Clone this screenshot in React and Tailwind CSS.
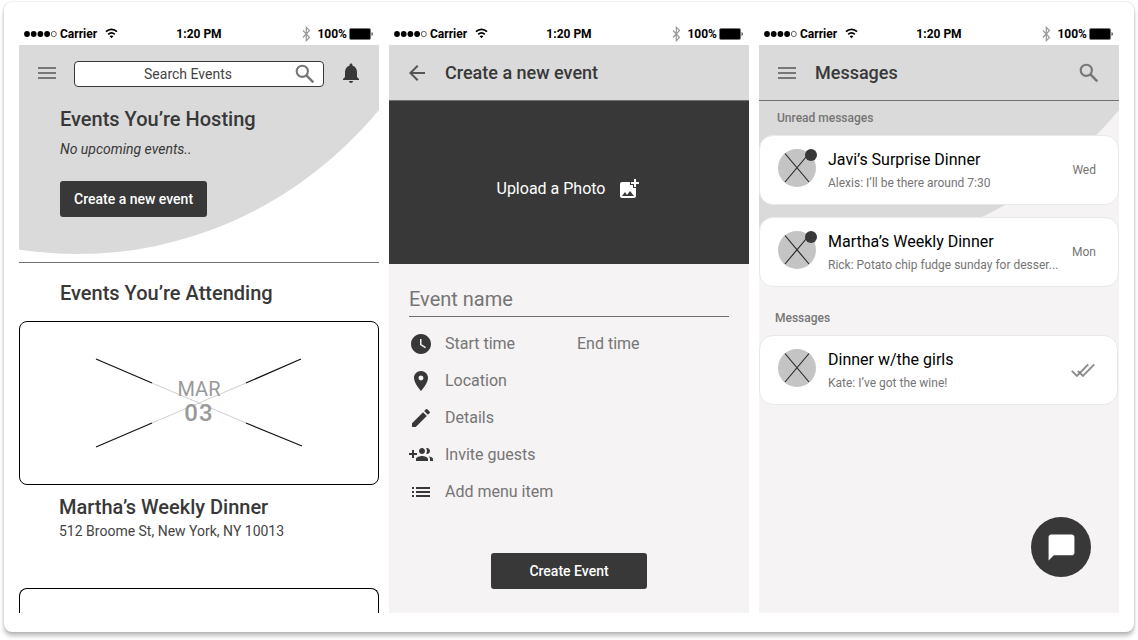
import React from "react";
import {
  MdMenu,
  MdNotifications,
  MdArrowBack,
  MdAddPhotoAlternate,
  MdWatchLater,
  MdPlace,
  MdEdit,
  MdList,
  MdChatBubble,
} from "react-icons/md";

function StatusBar() {
  return (
    <div className="grid h-6 grid-cols-3 items-center pt-px text-xs font-bold text-black">
      <div className="flex items-center pl-1">
        <svg width="34" height="8" viewBox="0 0 34 8" aria-hidden="true">
          <ellipse cx="4" cy="4" rx="2.9" ry="3" />
          <ellipse cx="10.7" cy="4" rx="2.9" ry="3" />
          <ellipse cx="17.4" cy="4" rx="2.9" ry="3" />
          <ellipse cx="24.1" cy="4" rx="2.9" ry="3" />
          <ellipse cx="30.8" cy="4" rx="2.5" ry="2.7" fill="none" stroke="#222" strokeWidth="0.7" />
        </svg>
        <span className="ml-[3px]">Carrier</span>
        <svg className="ml-2" width="13" height="11" viewBox="0 0 13 11" fill="none" stroke="#000" strokeWidth="1.7" aria-hidden="true">
          <path d="M1 3.7C4 .7 9 .7 12 3.7" />
          <path d="M3.2 6.3C5.1 4.4 7.9 4.4 9.8 6.3" />
          <path d="M4.6 8.3Q6.5 6.8 8.4 8.3L6.5 10.3Z" fill="#000" stroke="none" />
        </svg>
      </div>
      <div className="text-center">1:20 PM</div>
      <div className="flex items-center justify-end pr-1.5">
        <svg className="mr-1.5" width="9" height="16" viewBox="0 0 9 16" fill="none" stroke="#999" strokeWidth="1.2" aria-hidden="true">
          <path d="M1 4.5L7.5 11.5L4.3 14.7V1.3L7.5 4.5L1 11.5" />
        </svg>
        <span>100%</span>
        <svg className="ml-0.5" width="24" height="12" viewBox="0 0 24 12" aria-hidden="true">
          <rect x="0.5" y="0.5" width="21" height="11" rx="1.5" fill="#000" stroke="#777" />
          <path d="M22.5 4Q24 4.5 24 6T22.5 8Z" fill="#555" />
        </svg>
      </div>
    </div>
  );
}

function Swoosh() {
  return (
    <svg className="absolute top-0 left-0 h-[209px] w-full" viewBox="0 0 360 209" preserveAspectRatio="none" aria-hidden="true">
      <ellipse cx="59" cy="-213" rx="400" ry="422" fill="#dadada" />
    </svg>
  );
}

function GroupAddIcon({ size, className }) {
  return (
    <svg width={size} height={size} viewBox="0 0 24 24" fill="currentColor" className={className} aria-hidden="true">
      <path d="M8 10H5V7H3v3H0v2h3v3h2v-3h3v-2zm10 1c1.66 0 2.99-1.34 2.99-3S19.66 5 18 5c-.32 0-.63.05-.91.14.57.81.9 1.79.9 2.86s-.34 2.04-.9 2.86c.28.09.59.14.91.14zm-5 0c1.66 0 2.99-1.34 2.99-3S14.66 5 13 5c-1.66 0-3 1.34-3 3s1.34 3 3 3zm6.62 2.16c.83.73 1.38 1.66 1.38 2.84v2h3v-2c0-1.54-2.37-2.49-4.38-2.84zM13 13c-2 0-6 1-6 3v2h12v-2c0-2-4-3-6-3z" />
    </svg>
  );
}

function SearchIcon() {
  return (
    <svg width="24" height="24" viewBox="0 0 24 24" fill="none" stroke="#777" aria-hidden="true">
      <circle cx="9.3" cy="9.3" r="5.6" strokeWidth="2.1" />
      <path d="M13.2 13.2L20.3 20.3" strokeWidth="2.5" />
    </svg>
  );
}

function DoubleCheckIcon() {
  return (
    <svg width="24" height="24" viewBox="0 0 24 24" fill="none" stroke="#777" strokeWidth="1.9" aria-hidden="true">
      <path d="M.8 12.8L5.9 17.9L17.3 6.4" strokeOpacity="0.85" />
      <path d="M6.8 12.8L11.9 17.900L23.3 6.4" strokeOpacity="0.85" />
    </svg>
  );
}

function EventsScreen() {
  return (
    <section className="flex flex-col">
      <StatusBar />
      <div className="relative h-[218px] border-b border-[#707070]">
        <Swoosh />
        <div className="relative">
          <div className="flex h-14 items-center px-4">
            <button aria-label="Menu" className="text-[#777]">
              <MdMenu size={24} />
            </button>
            <label className="mt-0.5 ml-[15px] flex h-[26px] flex-1 items-center rounded border border-[#383838] bg-white pr-1.5">
              <input
                aria-label="Search events"
                placeholder="Search Events"
                className="min-w-0 flex-1 bg-transparent pl-2 text-center text-sm outline-none placeholder:text-[#444]"
              />
              <SearchIcon />
            </label>
            <button aria-label="Notifications" className="ml-[15px] text-[#383838]">
              <MdNotifications size={24} />
            </button>
          </div>
          <div className="px-[41px] pt-1">
            <h2 className="text-xl leading-7 font-medium text-[#383838]">Events You’re Hosting</h2>
            <p className="mt-1.5 text-sm leading-5 text-[#383838] italic">No upcoming events..</p>
            <button className="mt-[22px] h-9 rounded-[3px] bg-[#383838] px-3.5 text-sm font-medium text-white">
              Create a new event
            </button>
          </div>
        </div>
      </div>
      <h2 className="px-[41px] pt-4 pb-3.5 text-xl leading-7 font-medium text-[#383838]">Events You’re Attending</h2>
      <article>
        <div className="relative flex h-[164px] flex-col items-center justify-center rounded-lg border border-black pb-1">
          <svg className="absolute inset-0 m-auto" width="208" height="90" viewBox="0 0 208 90" fill="none" aria-hidden="true">
            <path d="M57 25L151 65M57 65L151 25" stroke="#cfcfcf" />
            <path d="M1 1L57 25M1 89L57 65M206 1L151 25M207 88L151 65" stroke="#111" strokeWidth="1.2" />
          </svg>
          <span className="relative text-xl leading-6 text-[#999]">MAR</span>
          <span className="relative text-2xl leading-6 font-medium tracking-wider text-[#999]">03</span>
        </div>
        <div className="px-10 pt-2">
          <h3 className="text-xl leading-7 font-medium text-[#383838]">Martha’s Weekly Dinner</h3>
          <p className="text-sm leading-5 text-[#444]">512 Broome St, New York, NY 10013</p>
        </div>
      </article>
      <div className="mt-[47px] h-[25px] rounded-t-lg border border-b-0 border-black" />
    </section>
  );
}

function FieldRow({ icon: Icon, children }) {
  return (
    <div className="flex h-[37px] items-center gap-3">
      <Icon size={24} className="shrink-0 text-[#383838]" />
      {children}
    </div>
  );
}

const field = "min-w-0 bg-transparent text-base outline-none placeholder:text-[#757575]";

function CreateScreen() {
  return (
    <section className="flex flex-col">
      <StatusBar />
      <div className="flex flex-1 flex-col bg-[#f5f3f4]">
        <header className="flex h-14 items-center gap-4 border-b border-[#707070] bg-[#dadada] px-4">
          <button aria-label="Back" className="text-[#555]">
            <MdArrowBack size={24} />
          </button>
          <h1 className="text-lg font-medium text-[#383838]">Create a new event</h1>
        </header>
        <button className="flex h-[163px] items-center justify-center gap-3 bg-[#383838] pt-3 text-base text-white">
          Upload a Photo
          <MdAddPhotoAlternate size={24} />
        </button>
        <form className="flex flex-1 flex-col px-5 pt-[17px]" onSubmit={(e) => e.preventDefault()}>
          <input
            aria-label="Event name"
            placeholder="Event name"
            className="mb-2 h-9 border-b border-[#707070] bg-transparent text-xl outline-none placeholder:text-[#757575]"
          />
          <FieldRow icon={MdWatchLater}>
            <input aria-label="Start time" placeholder="Start time" className={field + " w-[120px]"} />
            <input aria-label="End time" placeholder="End time" className={field + " w-[120px]"} />
          </FieldRow>
          <FieldRow icon={MdPlace}>
            <input aria-label="Location" placeholder="Location" className={field} />
          </FieldRow>
          <FieldRow icon={MdEdit}>
            <input aria-label="Details" placeholder="Details" className={field} />
          </FieldRow>
          <FieldRow icon={GroupAddIcon}>
            <button type="button" className="text-base text-[#757575]">Invite guests</button>
          </FieldRow>
          <FieldRow icon={MdList}>
            <button type="button" className="text-base text-[#757575]">Add menu item</button>
          </FieldRow>
          <button className="mt-[43px] mb-6 h-9 w-[156px] self-center rounded-[3px] bg-[#383838] text-sm font-medium text-white">
            Create Event
          </button>
        </form>
      </div>
    </section>
  );
}

function MessageCard({ title, text, time, unread }) {
  return (
    <li className="flex h-[70px] rounded-[14px] border border-[#e9e9e9] bg-white pr-[22px] pl-[18px]">
      <div className="relative mt-[13px] h-[38px] w-[38px] shrink-0">
        <svg width="38" height="38" viewBox="0 0 38 38" aria-hidden="true">
          <circle cx="19" cy="19" r="19" fill="#c4c4c4" />
          <path d="M7 4.5L31 33M31 4.5L7 33" stroke="#222" strokeWidth="1.1" />
        </svg>
        {unread && <span className="absolute top-0 -right-px h-3 w-3 rounded-full bg-[#383838]" />}
      </div>
      <div className="ml-3 min-w-0 flex-1 pt-3">
        <h3 className="truncate text-base leading-6 text-black">{title}</h3>
        <p className="truncate text-xs leading-[22px] text-[#757575]">{text}</p>
      </div>
      <div className="ml-2.5 self-center text-xs text-[#757575]">{time || <DoubleCheckIcon />}</div>
    </li>
  );
}

function MessagesScreen() {
  return (
    <section className="flex flex-col">
      <StatusBar />
      <div className="relative flex flex-1 flex-col bg-[#f5f3f4]">
        <Swoosh />
        <div className="relative flex flex-1 flex-col">
          <header className="flex h-14 items-center gap-4 border-b border-[#707070] pr-[18px] pl-4">
            <button aria-label="Menu" className="text-[#777]">
              <MdMenu size={24} />
            </button>
            <h1 className="flex-1 text-lg font-medium text-[#383838]">Messages</h1>
            <button aria-label="Search">
              <SearchIcon />
            </button>
          </header>
          <h2 className="px-[18px] py-[9px] text-xs leading-4 font-medium text-[#757575]">Unread messages</h2>
          <ul className="flex flex-col gap-3">
            <MessageCard title="Javi’s Surprise Dinner" text="Alexis: I’ll be there around 7:30" time="Wed" unread />
            <MessageCard title="Martha’s Weekly Dinner" text="Rick: Potato chip fudge sunday for desser..." time="Mon" unread />
          </ul>
          <h2 className="px-4 pt-[23px] pb-[9px] text-xs leading-4 font-medium text-[#757575]">Messages</h2>
          <ul className="pr-px">
            <MessageCard title="Dinner w/the girls" text="Kate: I’ve got the wine!" />
          </ul>
          <button
            aria-label="New message"
            className="mt-auto mr-7 mb-9 flex h-15 w-15 items-center justify-center self-end rounded-full bg-[#383838] text-white"
          >
            <MdChatBubble size={31} />
          </button>
        </div>
      </div>
    </section>
  );
}

export default function App() {
  return (
    <div className="px-1 pt-0.5 pb-2 font-[Roboto,sans-serif]">
      <main className="grid grid-cols-3 gap-2.5 rounded-lg bg-white px-[15px] py-[19px] shadow-[0_4px_4px_rgba(0,0,0,0.25),0_0_2px_rgba(0,0,0,0.2)]">
        <EventsScreen />
        <CreateScreen />
        <MessagesScreen />
      </main>
    </div>
  );
}
